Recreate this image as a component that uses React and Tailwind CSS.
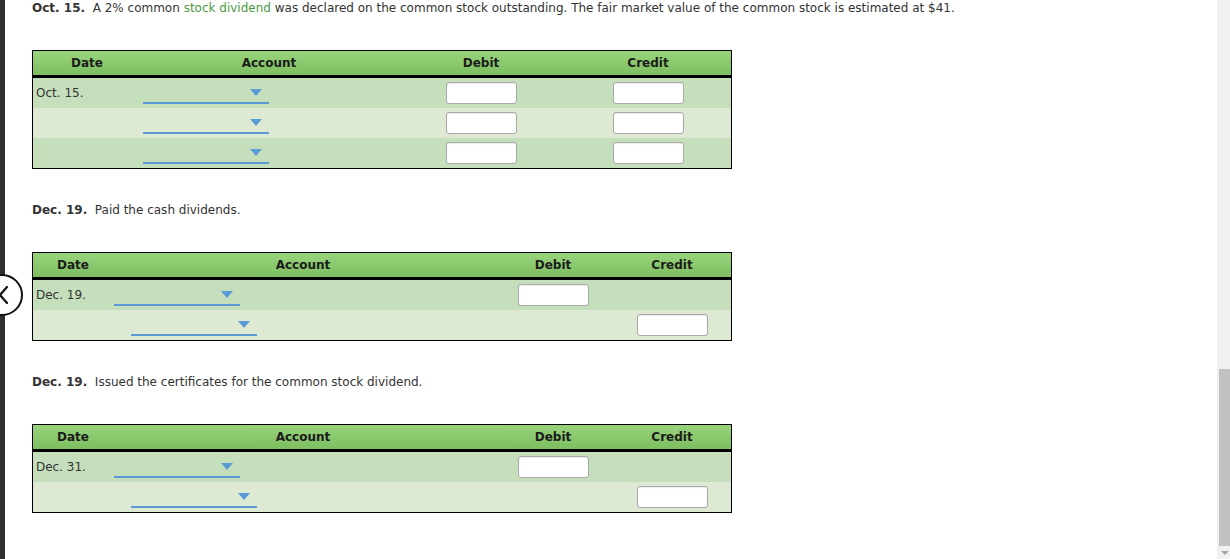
import React from "react";

const font = { fontFamily: '"DejaVu Sans", Verdana, sans-serif' };

function Select({ indent }) {
  return (
    <div className={`relative h-[30px] w-[126px] ${indent}`}>
      <div className="absolute right-[7px] top-[11px] h-0 w-0 border-l-[6.5px] border-r-[6.5px] border-t-[7px] border-l-transparent border-r-transparent border-t-[#5b9bd5]" />
      <div className="absolute bottom-[4px] left-0 h-[2px] w-full bg-[#5b9bd5]" />
    </div>
  );
}

function Input() {
  return <div className="h-[22px] w-[71px] rounded-[3px] border border-[#a8a8a8] bg-white shadow-[inset_0_1px_1px_rgba(0,0,0,0.08)]" />;
}

function Header({ cols }) {
  return (
    <div
      className="grid h-[27px] border-b-[3px] border-black bg-gradient-to-b from-[#98d47c] to-[#7dbe60] text-[12px] font-bold text-[#1b1b1b]"
      style={{ gridTemplateColumns: cols }}
    >
      <div className="flex items-center justify-center">Date</div>
      <div className="flex items-center justify-center">Account</div>
      <div className="flex items-center justify-center">Debit</div>
      <div className="flex items-center justify-center">Credit</div>
    </div>
  );
}

function Row({ cols, shade, date, selIndent, debit, credit }) {
  return (
    <div className={`grid h-[30px] ${shade ? "bg-[#c5dfbd]" : "bg-[#dde9d3]"}`} style={{ gridTemplateColumns: cols }}>
      <div className="flex items-center pl-[3px] text-[12px] text-[#333]">{date}</div>
      <div className="flex items-center">
        <Select indent={selIndent} />
      </div>
      <div className="flex items-center justify-center">{debit && <Input />}</div>
      <div className="flex items-center justify-center">{credit && <Input />}</div>
    </div>
  );
}

function Table({ cols, rows }) {
  return (
    <div className="w-[700px] border border-black">
      <Header cols={cols} />
      {rows.map((r, i) => (
        <Row key={i} cols={cols} shade={i % 2 === 0} {...r} />
      ))}
    </div>
  );
}

export default function App() {
  const cols1 = "108px 256px 168px 166px";
  const cols2 = "80px 380px 120px 118px";
  return (
    <div className="relative flex h-[559px] w-[1230px] overflow-hidden bg-white" style={font}>
      <div className="w-[5px] shrink-0 bg-[#2f2f2f]" />
      <div className="flex-1 pl-[27px] text-[12px] text-[#333]">
        <p className="pt-[1px] leading-[15px]">
          <span className="font-bold">Oct. 15.</span>&nbsp; A 2% common{" "}
          <span className="text-[#4e9a43]">stock dividend</span> was declared on the common stock outstanding. The fair
          market value of the common stock is estimated at $41.
        </p>
        <div className="mt-[34px]">
          <Table
            cols={cols1}
            rows={[
              { date: "Oct. 15.", selIndent: "ml-[2px]", debit: true, credit: true },
              { date: "", selIndent: "ml-[2px]", debit: true, credit: true },
              { date: "", selIndent: "ml-[2px]", debit: true, credit: true },
            ]}
          />
        </div>
        <p className="mt-[33px] pt-[1px] leading-[15px]">
          <span className="font-bold">Dec. 19.</span>&nbsp; Paid the cash dividends.
        </p>
        <div className="mt-[34px]">
          <Table
            cols={cols2}
            rows={[
              { date: "Dec. 19.", selIndent: "ml-[1px]", debit: true, credit: false },
              { date: "", selIndent: "ml-[18px]", debit: false, credit: true },
            ]}
          />
        </div>
        <p className="mt-[33px] pt-[1px] leading-[15px]">
          <span className="font-bold">Dec. 19.</span>&nbsp; Issued the certificates for the common stock dividend.
        </p>
        <div className="mt-[34px]">
          <Table
            cols={cols2}
            rows={[
              { date: "Dec. 31.", selIndent: "ml-[1px]", debit: true, credit: false },
              { date: "", selIndent: "ml-[18px]", debit: false, credit: true },
            ]}
          />
        </div>
      </div>
      <div className="flex w-[13px] shrink-0 flex-col bg-[#f1f1f1]">
        <div className="h-[369px]" />
        <div className="ml-[2px] h-[177px] bg-[#c1c1c1]" />
        <div className="flex flex-1 items-center justify-center pl-[2px]">
          <div className="h-0 w-0 border-l-[4px] border-r-[4px] border-t-[4px] border-l-transparent border-r-transparent border-t-[#a3a3a3]" />
        </div>
      </div>
      <div className="absolute left-[-19px] top-[274px] flex h-[42px] w-[42px] items-center justify-center rounded-full border-2 border-[#111] bg-white">
        <svg width="42" height="42" viewBox="0 0 42 42" className="absolute left-[-2px] top-[-2px]">
          <path d="M26 13 L19 21 L26 29" fill="none" stroke="#111" strokeWidth="2.2" strokeLinecap="round" strokeLinejoin="round" />
        </svg>
      </div>
    </div>
  );
}
